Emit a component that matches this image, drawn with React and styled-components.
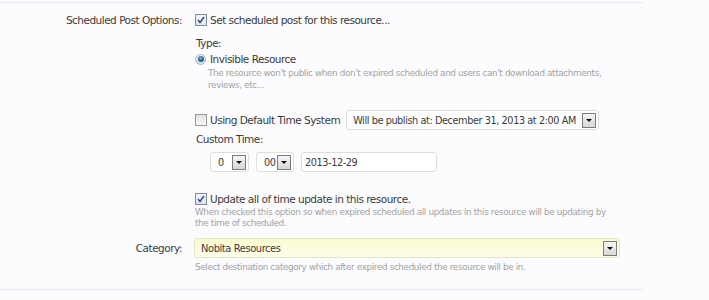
import React from "react";
import styled, { createGlobalStyle } from "styled-components";

const GlobalStyle = createGlobalStyle`
  body {
    margin: 0;
    background: #fcfcfe;
    font-family: "DejaVu Sans", Verdana, sans-serif;
    color: #3a3a3a;
  }
`;

const Page = styled.div`
  padding-top: 2px;
`;

const Fieldset = styled.div`
  width: 643px;
  border-top: 1px solid #e4eef0;
  border-bottom: 1px solid #e4eef0;
  padding: 9px 0 16px;
`;

const Row = styled.div`
  display: grid;
  grid-template-columns: 182px 1fr;
  column-gap: 12px;
  margin-top: ${(p) => p.$gap || 0}px;
`;

const Label = styled.div`
  text-align: right;
  font-size: 10.5px;
  letter-spacing: -0.5px;
  line-height: ${(p) => p.$lh || 16}px;
  color: #3a3a3a;
`;

const Content = styled.div`
  display: flex;
  flex-direction: column;
  align-items: flex-start;
`;

const Line = styled.div`
  display: flex;
  align-items: center;
  gap: ${(p) => p.$gap || 0}px;
  height: ${(p) => p.$h || 16}px;
  margin-top: ${(p) => p.$mt || 0}px;
  margin-left: ${(p) => p.$ml || 0}px;
`;

const Text = styled.span`
  font-size: 10.5px;
  letter-spacing: -0.5px;
  line-height: 16px;
  white-space: nowrap;
  color: #3a3a3a;
`;

const SubLabel = styled.div`
  font-size: 10.5px;
  letter-spacing: -0.5px;
  line-height: 16px;
  margin-top: ${(p) => p.$mt || 0}px;
  margin-left: 2px;
`;

const Hint = styled.p`
  margin: ${(p) => p.$mt || 0}px 0 0 ${(p) => p.$ml || 0}px;
  font-size: 8.8px;
  letter-spacing: -0.35px;
  line-height: ${(p) => p.$lh || 12}px;
  color: #a2a2a2;
  width: ${(p) => p.$w || 420}px;
`;

const Box = styled.span`
  width: 10px;
  height: 10px;
  margin: 0 3px 0 1px;
  border: 1px solid ${(p) => (p.$checked ? "#7d8ba6" : "#9a9a9a")};
  background: ${(p) =>
    p.$checked
      ? "linear-gradient(#f4f6fb, #dfe4ee)"
      : "linear-gradient(#e4e4e4, #f6f6f6)"};
  display: inline-flex;
  align-items: center;
  justify-content: center;
  flex: none;
`;

const Radio = styled.span`
  box-sizing: border-box;
  width: 11px;
  height: 11px;
  margin: 0 4px 0 1px;
  border-radius: 50%;
  border: 1px solid #a9b5c2;
  background: linear-gradient(#f0f3f6, #d5dce3);
  display: inline-flex;
  align-items: center;
  justify-content: center;
  flex: none;
  &::after {
    content: "";
    width: 6px;
    height: 6px;
    border-radius: 50%;
    background: radial-gradient(circle at 45% 35%, #8cc3e0 0, #2a6c98 45%, #123f63 100%);
  }
`;

const Select = styled.span`
  display: inline-flex;
  align-items: center;
  justify-content: space-between;
  box-sizing: border-box;
  width: ${(p) => p.$w}px;
  height: 20px;
  padding: 0 2px 0 ${(p) => p.$pl || 6}px;
  border: 1px solid ${(p) => (p.$yellow ? "#e4e4c8" : "#dedede")};
  border-radius: 3px;
  background: ${(p) =>
    p.$yellow ? "linear-gradient(#fbfbd0, #fefee8)" : "#ffffff"};
  font-size: ${(p) => p.$fs || 9.7}px;
  letter-spacing: -0.4px;
  color: #3a3a3a;
  white-space: nowrap;
`;

const Arrow = styled.span`
  width: 12px;
  height: 13px;
  border: 1px solid #7c7c7c;
  background: linear-gradient(#f6f6f6, #d6d6d6);
  display: inline-flex;
  align-items: center;
  justify-content: center;
  flex: none;
  &::after {
    content: "";
    border-left: 3px solid transparent;
    border-right: 3px solid transparent;
    border-top: 3px solid #111;
    margin-top: 1px;
  }
`;

const Input = styled.span`
  display: inline-flex;
  align-items: center;
  box-sizing: border-box;
  width: 136px;
  height: 20px;
  padding-left: 3px;
  border: 1px solid #dedede;
  border-radius: 3px;
  background: #fff;
  font-size: 9.7px;
  letter-spacing: -0.4px;
  color: #3a3a3a;
`;

const Check = ({ checked }) => (
  <Box $checked={checked}>
    {checked && (
      <svg width="8" height="8" viewBox="0 0 8 8">
        <path d="M1 4 L3 6.5 L7 1" fill="none" stroke="#2b4a8c" strokeWidth="1.4" />
      </svg>
    )}
  </Box>
);

export default function App() {
  return (
    <Page>
      <GlobalStyle />
      <Fieldset>
        <Row>
          <Label>Scheduled Post Options:</Label>
          <Content>
            <Line>
              <Check checked />
              <Text>Set scheduled post for this resource...</Text>
            </Line>
            <SubLabel $mt={7}>Type:</SubLabel>
            <Line>
              <Radio />
              <Text>Invisible Resource</Text>
            </Line>
            <Hint $ml={14} $w={410}>
              The resource won't public when don't expired scheduled and users can't download attachments,
              reviews, etc...
            </Hint>
            <Line $mt={19} $h={20} $gap={6}>
              <Line>
                <Check />
                <Text>Using Default Time System</Text>
              </Line>
              <Select $w={253}>
                Will be publish at: December 31, 2013 at 2:00 AM
                <Arrow />
              </Select>
            </Line>
            <SubLabel $mt={1}>Custom Time:</SubLabel>
            <Line $mt={5} $h={20} $ml={16} $gap={7}>
              <Select $w={39} $pl={7}>
                0
                <Arrow />
              </Select>
              <Select $w={38} $pl={7}>
                00
                <Arrow />
              </Select>
              <Input>2013-12-29</Input>
            </Line>
            <Line $mt={19}>
              <Check checked />
              <Text>Update all of time update in this resource.</Text>
            </Line>
            <Hint $lh={11} $w={418} $ml={1}>
              When checked this option so when expired scheduled all updates in this resource will be updating by
              the time of scheduled.
            </Hint>
          </Content>
        </Row>
        <Row $gap={9}>
          <Label $lh={20}>Category:</Label>
          <Content>
            <Select $w={426} $yellow $fs={9.9}>
              Nobita Resources
              <Arrow />
            </Select>
            <Hint $mt={3} $ml={1}>
              Select destination category which after expired scheduled the resource will be in.
            </Hint>
          </Content>
        </Row>
      </Fieldset>
    </Page>
  );
}
